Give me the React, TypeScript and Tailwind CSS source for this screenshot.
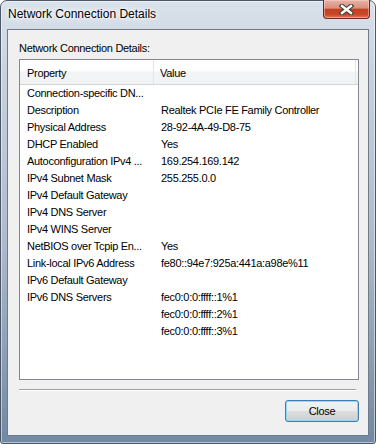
import React from 'react'

const ROWS: [string, string][] = [
  ['Connection-specific DN...', ''],
  ['Description', 'Realtek PCIe FE Family Controller'],
  ['Physical Address', '28-92-4A-49-D8-75'],
  ['DHCP Enabled', 'Yes'],
  ['Autoconfiguration IPv4 ...', '169.254.169.142'],
  ['IPv4 Subnet Mask', '255.255.0.0'],
  ['IPv4 Default Gateway', ''],
  ['IPv4 DNS Server', ''],
  ['IPv4 WINS Server', ''],
  ['NetBIOS over Tcpip En...', 'Yes'],
  ['Link-local IPv6 Address', 'fe80::94e7:925a:441a:a98e%11'],
  ['IPv6 Default Gateway', ''],
  ['IPv6 DNS Servers', 'fec0:0:0:ffff::1%1'],
  ['', 'fec0:0:0:ffff::2%1'],
  ['', 'fec0:0:0:ffff::3%1'],
]

function CloseGlyph() {
  return (
    <svg width="15" height="11" viewBox="0 0 15 11">
      <path d="M3 2 L12 9 M12 2 L3 9" stroke="#3b3b3b" strokeWidth="4.6" strokeLinecap="square" />
      <path d="M3 2 L12 9 M12 2 L3 9" stroke="#ffffff" strokeWidth="2.4" strokeLinecap="square" />
    </svg>
  )
}

export default function App() {
  return (
    <div className="w-[376px] h-[444px] bg-white font-['Liberation_Sans',Arial,sans-serif] text-black">
      {/* window frame */}
      <div className="w-full h-full flex flex-col rounded-t-[7px] rounded-b-[3px] border border-[#4b5768] bg-[linear-gradient(180deg,#d9e2eb_0%,#c6d1dd_18%,#adbacb_55%,#7189a3_100%)] shadow-[inset_0_0_0_1px_rgba(255,255,255,0.5)]">
        {/* title bar */}
        <div className="h-[28px] flex items-start justify-between pl-[7px] pr-[5px]">
          <div className="pt-[6px] text-[12px] leading-[15px] [text-shadow:0_0_10px_#fff,0_0_6px_#fff,0_0_3px_#fff]">
            Network Connection Details
          </div>
          <button className="-mt-px w-[47px] h-[19px] flex items-center justify-center rounded-b-[4px] border border-t-0 border-[#6b2a1f] bg-[linear-gradient(180deg,#e8b3a6_0%,#d98f7e_45%,#c5401f_52%,#c8472a_80%,#dd7a57_100%)] shadow-[inset_0_0_0_1px_rgba(255,220,210,0.45)]">
            <CloseGlyph />
          </button>
        </div>

        {/* client area */}
        <div className="mx-[6px] mb-[7px] flex-1 flex flex-col border border-[#707b8a] bg-[#f0f0f0] pl-[11px] pr-[9px] pt-[11px] pb-[13px] text-[11px] tracking-[-0.3px]">
          <div className="leading-[14px]">Network Connection Details:</div>

          <div className="mt-[4px] h-[321px] border border-[#828790] bg-white flex flex-col">
            <div className="h-[25px] flex border-b border-[#d5d5d5] bg-[linear-gradient(180deg,#ffffff_0%,#ffffff_45%,#f3f4f6_50%,#f1f2f4_100%)] leading-[24px]">
              <div className="w-[134px] pl-[7px] pt-px border-r border-[#e3e5e8]">Property</div>
              <div className="w-[202px] pl-[6px] pt-px border-r border-[#e3e5e8]">Value</div>
              <div className="flex-1" />
            </div>
            {ROWS.map(([k, v], i) => (
              <div key={i} className="h-[17px] grid grid-cols-[134px_1fr] leading-[17px]">
                <div className="pl-[7px] whitespace-nowrap">{k}</div>
                <div className="pl-[7px] whitespace-nowrap">{v}</div>
              </div>
            ))}
          </div>

          <div className="mt-[9px] w-[337px] h-[2px] border-t border-[#a0a0a0] border-b border-b-white" />

          <div className="mt-[9px] flex justify-end">
            <button className="w-[74px] h-[22px] rounded-[3px] border border-[#3c7fb1] bg-[linear-gradient(180deg,#f2f2f2_0%,#ebebeb_48%,#dddddd_52%,#cfcfcf_100%)] shadow-[inset_0_0_0_1px_#8fd8f7] leading-[20px]">
              Close
            </button>
          </div>
        </div>
      </div>
    </div>
  )
}
